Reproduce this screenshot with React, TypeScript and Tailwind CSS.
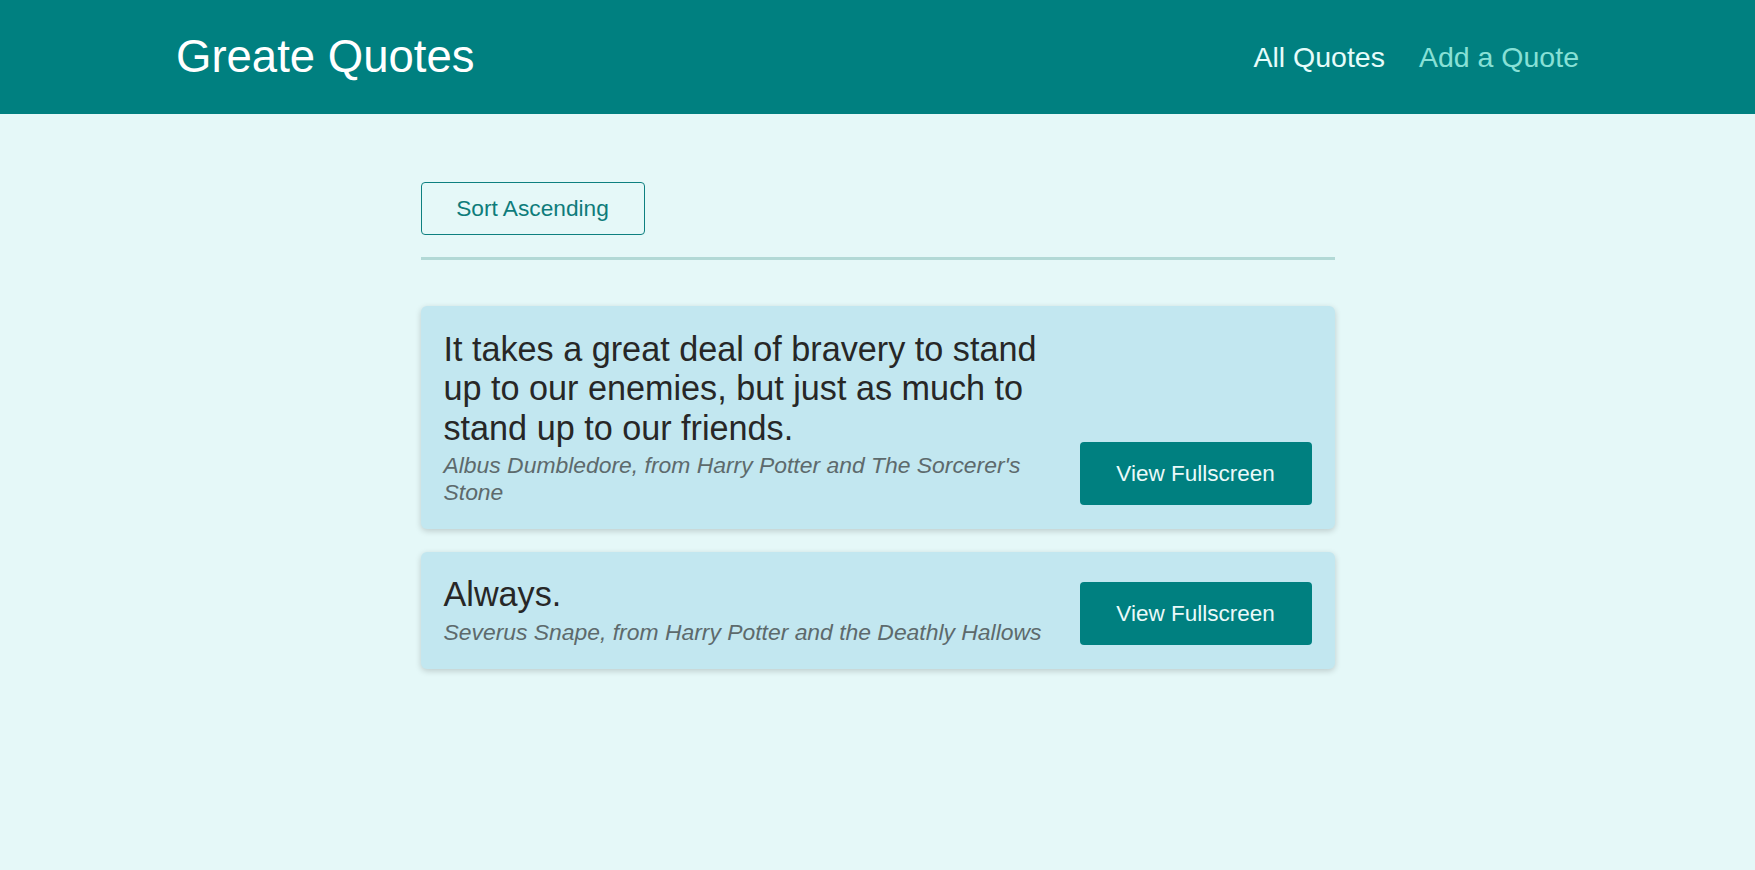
const quotes = [
  {
    id: "q1",
    text: "It takes a great deal of bravery to stand up to our enemies, but just as much to stand up to our friends.",
    author: "Albus Dumbledore, from Harry Potter and The Sorcerer's Stone",
  },
  {
    id: "q2",
    text: "Always.",
    author: "Severus Snape, from Harry Potter and the Deathly Hallows",
  },
];

function QuoteItem({ text, author }: { text: string; author: string }) {
  return (
    <li className="flex items-end justify-between rounded-[6px] bg-[#c2e7f0] px-[23px] py-[23.5px] shadow-[0_2px_6px_rgba(0,0,0,0.18)]">
      <figure className="w-[615px]">
        <blockquote className="text-[34.2px] leading-[39.5px] text-[#272727]">{text}</blockquote>
        <figcaption className="mt-[4px] text-[22.9px] leading-[26.5px] italic text-[#5d6a6c]">{author}</figcaption>
      </figure>
      <button className="h-[63px] w-[232px] rounded-[4px] bg-[#008080] text-[22.5px] text-[#eafafa]">
        View Fullscreen
      </button>
    </li>
  );
}

export default function App() {
  return (
    <div className="min-h-screen bg-[#e5f8f8] font-['Liberation_Sans',Arial,sans-serif]">
      <header className="flex h-[114px] items-center justify-between bg-[#008080] px-[176px]">
        <h1 className="text-[45.5px] leading-none text-white">Greate Quotes</h1>
        <nav className="flex items-center gap-[34px] text-[28.5px]">
          <a className="text-[#e6fcfa]">All Quotes</a>
          <a className="text-[#88e0d6]">Add a Quote</a>
        </nav>
      </header>

      <main className="mx-auto w-[914px] pt-[68px]">
        <div className="border-b-[3px] border-[#b2d9d6] pb-[22px]">
          <button className="h-[53px] w-[224px] rounded-[4px] border border-[#0e8080] text-[22.7px] text-[#0e7c7b]">
            Sort Ascending
          </button>
        </div>
        <ul className="mt-[46px] flex flex-col gap-[23px]">
          {quotes.map((q) => (
            <QuoteItem key={q.id} text={q.text} author={q.author} />
          ))}
        </ul>
      </main>
    </div>
  );
}
